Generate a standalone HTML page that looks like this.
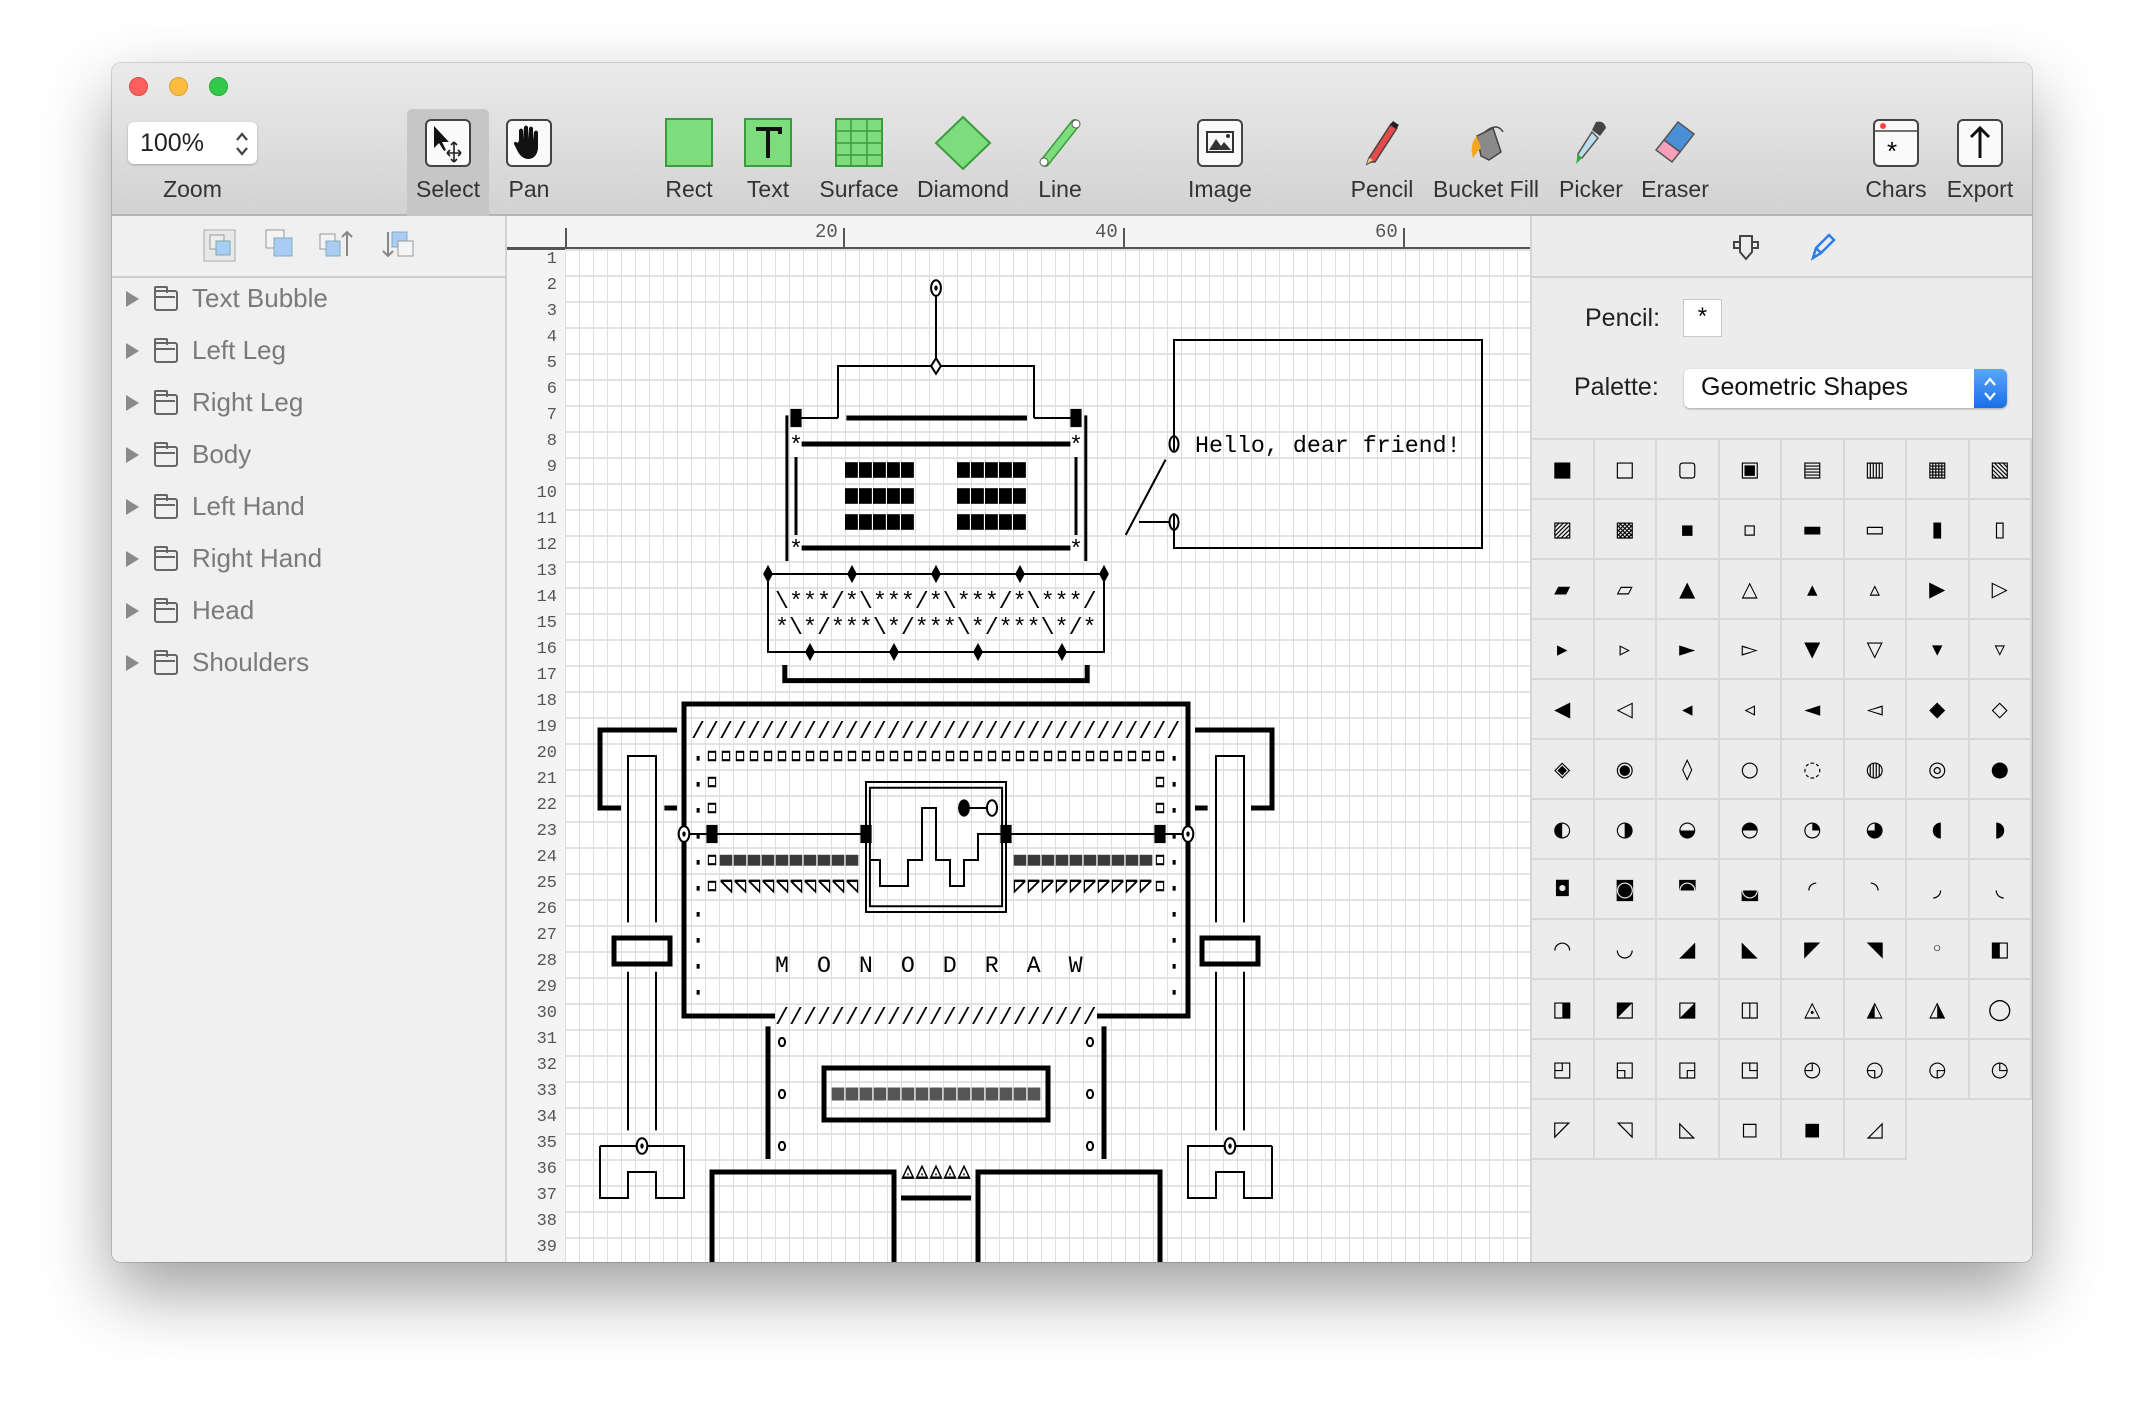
<!DOCTYPE html>
<html><head><meta charset="utf-8"><style>
*{margin:0;padding:0;box-sizing:border-box}
body{width:2144px;height:1424px;background:#fff;position:relative;overflow:hidden;font-family:"Liberation Sans",sans-serif}
.win{position:absolute;left:112px;top:63px;width:1920px;height:1199px;border-radius:9px;overflow:hidden;box-shadow:0 30px 70px rgba(0,0,0,.38),0 0 0 1px rgba(0,0,0,.15);background:#ececec}
.tb{position:absolute;left:0;top:0;width:1920px;height:153px;background:linear-gradient(#ebebeb,#d2d2d2);border-bottom:2px solid #b4b4b4}
.dot{position:absolute;top:14px;width:19px;height:19px;border-radius:50%}
.ti{position:absolute;top:0;width:120px;margin-left:-60px;text-align:center}
.ti svg{position:absolute;left:35px;top:55px}
.ti span{position:absolute;left:0;width:120px;top:113px;font-size:23px;color:#333}
.abs{position:absolute}
.side{position:absolute;left:0;top:153px;width:395px;height:1046px;background:#f0f0f0;border-right:2px solid #d2d2d2}
.item{position:absolute;left:0;height:40px;width:395px;font-size:26px;color:#7a7a7a}
.item .tri{position:absolute;left:14px;top:10px;width:0;height:0;border-left:13px solid #8a8a8a;border-top:8px solid transparent;border-bottom:8px solid transparent}
.item .fold{position:absolute;left:42px;top:9px;width:24px;height:21px;border:2.5px solid #666;border-radius:3px}
.item .fold:before{content:"";position:absolute;left:-2.5px;top:-6px;width:10px;height:5px;border:2.5px solid #666;border-bottom:none;border-radius:2px 2px 0 0}
.item .fold:after{content:"";position:absolute;left:0;top:4px;width:19px;height:0;border-top:2px solid #666}
.item b{position:absolute;left:80px;top:2px;font-weight:normal}
.canvas{position:absolute;left:395px;top:153px;width:1023px;height:1046px;background:#f4f4f4}
.grid{position:absolute;left:58px;top:33px;width:965px;height:1013px;background-color:#fff;background-image:linear-gradient(to right,#dedede 1px,transparent 1px),linear-gradient(to bottom,#e3e3e3 2px,transparent 2px);background-size:14px 26px}
.rn{position:absolute;left:0;width:50px;text-align:right;font-family:"Liberation Mono",monospace;font-size:17px;color:#555}
.right{position:absolute;left:1418px;top:153px;width:502px;height:1046px;background:#ececec;border-left:2px solid #d4d4d4}
.pal{position:absolute;left:0;top:222px;width:502px;display:grid;grid-template-columns:repeat(8,62.5px);grid-auto-rows:60px;border-top:2px solid #d8d8d8}
.pal div{border-right:2px solid #d8d8d8;border-bottom:2px solid #d8d8d8;text-align:center;line-height:58px;font-family:"DejaVu Sans",sans-serif;font-size:21px;color:#000}
.t{stroke:#000;stroke-width:2;fill:none;vector-effect:non-scaling-stroke}
.m{stroke:#000;stroke-width:3;fill:none;vector-effect:non-scaling-stroke}
.k{stroke:#000;stroke-width:5;fill:none;vector-effect:non-scaling-stroke}
.w{fill:#fff}
text{font-family:"Liberation Mono","DejaVu Sans Mono",monospace;font-size:23.3px;fill:#000;white-space:pre}
</style></head><body>
<div class="win">
 <div class="tb">
  <div class="dot" style="left:17px;background:#fc605c;border:1px solid #de4a46"></div>
  <div class="dot" style="left:57px;background:#fdbc40;border:1px solid #dea236"></div>
  <div class="dot" style="left:97px;background:#34c84a;border:1px solid #27aa35"></div>
  <div class="abs" style="left:16px;top:59px;width:129px;height:42px;background:#fff;border-radius:6px;box-shadow:0 1px 2px rgba(0,0,0,.25)"></div>
  <div class="abs" style="left:28px;top:66px;font-size:25px;color:#222">100%</div>
  <svg class="abs" style="left:122px;top:66px" width="16" height="30"><path d="M3,11 8,5 13,11M3,19 8,25 13,19" stroke="#444" stroke-width="2.2" fill="none"/></svg>
  <div class="abs" style="left:16px;top:113px;width:129px;text-align:center;font-size:23px;color:#333">Zoom</div>
  <div class="abs" style="left:295px;top:46px;width:82px;height:107px;background:#c6c6c6;border-radius:5px 5px 0 0"></div>
  <div class="ti" style="left:336px"><svg width="50" height="50"><rect x="3" y="2" width="44" height="46" rx="5" fill="#fafafa" stroke="#444" stroke-width="2"/><path d="M11,8 L11,30 L16,25 L21,33 L23,32 L19,24 L26,24Z" fill="#111"/><path d="M31,24V44M24,35H38M31,24l-3,3M31,24l3,3M31,44l-3,-3M31,44l3,-3M24,35l3,-3M24,35l3,3M38,35l-3,-3M38,35l-3,3" stroke="#222" stroke-width="1.6" fill="none"/></svg><span>Select</span></div>
  <div class="ti" style="left:417px"><svg width="50" height="50"><rect x="3" y="2" width="44" height="46" rx="5" fill="#fafafa" stroke="#444" stroke-width="2"/><path d="M15,22 L15,12 Q17,9 19,12 L19,21 L20,9 Q22,6 24,9 L24,21 L25,10 Q27,7 29,10 L29,22 L30,14 Q32,11 34,14 L34,30 Q33,40 25,41 Q18,41 14,34 L10,26 Q10,22 14,25Z" fill="#111"/></svg><span>Pan</span></div>
  <div class="ti" style="left:577px"><svg width="50" height="50"><rect x="2" y="1" width="46" height="47" fill="#7ddd7d" stroke="#3c9b3c" stroke-width="2"/></svg><span>Rect</span></div>
  <div class="ti" style="left:656px"><svg width="50" height="50"><rect x="2" y="1" width="46" height="47" fill="#7ddd7d" stroke="#3c9b3c" stroke-width="2"/><path d="M13,11H37V16M25,11V40" stroke="#111" stroke-width="4" fill="none"/></svg><span>Text</span></div>
  <div class="ti" style="left:747px"><svg width="50" height="50"><rect x="2" y="1" width="46" height="47" fill="#7ddd7d" stroke="#3c9b3c" stroke-width="2"/><path d="M17,1V48M33,1V48M2,13H48M2,25H48M2,37H48" stroke="#3c9b3c" stroke-width="1.5"/></svg><span>Surface</span></div>
  <div class="ti" style="left:851px"><svg width="60" height="56" style="left:30px;top:52px"><path d="M30,2 L57,28 L30,54 L3,28Z" fill="#7ddd7d" stroke="#3c9b3c" stroke-width="2"/></svg><span>Diamond</span></div>
  <div class="ti" style="left:948px"><svg width="50" height="50"><path d="M10,44 L40,6" stroke="#3c9b3c" stroke-width="10" stroke-linecap="round"/><path d="M10,44 L40,6" stroke="#7ddd7d" stroke-width="7" stroke-linecap="round"/><circle cx="41" cy="6" r="4" fill="#fff" stroke="#555"/><circle cx="9" cy="44" r="4" fill="#fff" stroke="#555"/></svg><span>Line</span></div>
  <div class="ti" style="left:1108px"><svg width="50" height="50"><rect x="3" y="2" width="44" height="46" rx="5" fill="#fafafa" stroke="#444" stroke-width="2"/><rect x="12" y="14" width="26" height="20" fill="none" stroke="#333" stroke-width="2"/><path d="M14,32 L21,21 L26,28 L29,24 L36,32Z" fill="#333"/><circle cx="33" cy="18" r="2" fill="#333"/></svg><span>Image</span></div>
  <div class="ti" style="left:1270px"><svg width="50" height="50"><path d="M14,44 L10,46 L12,40 L34,6 L40,10 L18,44Z" fill="#e64a4a" stroke="#444" stroke-width="1.5"/><path d="M33,7 L36,3 L42,7 L39,11Z" fill="#222"/><path d="M10,46 L12,40 L16,42Z" fill="#e8c890"/></svg><span>Pencil</span></div>
  <div class="ti" style="left:1374px"><svg width="50" height="50"><path d="M16,18 L32,10 L40,34 L28,42 L20,38Z" fill="#8a8a8a" stroke="#444" stroke-width="1.5"/><path d="M16,18 Q8,26 12,40 Q16,34 20,30Z" fill="#f5a623"/><path d="M24,14 Q36,4 42,14" stroke="#444" stroke-width="1.5" fill="none"/></svg><span>Bucket Fill</span></div>
  <div class="ti" style="left:1479px"><svg width="50" height="50"><path d="M30,4 Q38,2 40,10 L34,18 L26,12Z" fill="#444"/><path d="M26,14 L32,20 L16,40 L12,40 L12,36Z" fill="#bde" stroke="#555" stroke-width="1.5"/><path d="M12,36 L16,40 L10,46Z" fill="#3a3"/></svg><span>Picker</span></div>
  <div class="ti" style="left:1563px"><svg width="50" height="50"><path d="M28,4 L44,16 L30,34 L14,22Z" fill="#4a90d9" stroke="#555" stroke-width="1.5"/><path d="M14,22 L30,34 L22,44 L6,32Z" fill="#f7a0b8" stroke="#555" stroke-width="1.5"/></svg><span>Eraser</span></div>
  <div class="ti" style="left:1784px"><svg width="50" height="50"><rect x="3" y="2" width="44" height="46" rx="5" fill="#fafafa" stroke="#444" stroke-width="2"/><path d="M3,13H47" stroke="#444" stroke-width="1.5"/><circle cx="12" cy="8" r="3" fill="#f44"/><text x="16" y="42" style="font-family:'Liberation Sans';font-size:26px">*</text></svg><span>Chars</span></div>
  <div class="ti" style="left:1868px"><svg width="50" height="50"><rect x="3" y="2" width="44" height="46" rx="5" fill="#fafafa" stroke="#444" stroke-width="2"/><path d="M25,40V10M16,19L25,10L34,19" stroke="#111" stroke-width="3" fill="none"/></svg><span>Export</span></div>
 </div>

 <div class="side">
  <div class="abs" style="left:0;top:60px;width:395px;height:2px;background:#cfcfcf"></div>
  <svg class="abs" style="left:80px;top:10px" width="230" height="40">
   <rect x="12" y="4" width="31" height="31" fill="#e8e8e8" stroke="#aaa"/><rect x="18" y="9" width="14" height="14" fill="#eee" stroke="#999"/><rect x="24" y="15" width="14" height="14" fill="#a9ccf5" stroke="#7aa"/>
   <rect x="74" y="4" width="18" height="18" fill="#f4f4f4" stroke="#999"/><rect x="82" y="12" width="18" height="18" fill="#a9ccf5" stroke="#8ab"/>
   <rect x="128" y="8" width="15" height="15" fill="#f4f4f4" stroke="#999"/><rect x="134" y="15" width="14" height="15" fill="#a9ccf5" stroke="#8ab"/><path d="M155,30V6M150,11L155,6L160,11" stroke="#888" stroke-width="2" fill="none"/>
   <path d="M196,6V30M191,25L196,30L201,25" stroke="#888" stroke-width="2" fill="none"/><rect x="200" y="6" width="15" height="15" fill="#a9ccf5" stroke="#8ab"/><rect x="206" y="15" width="15" height="15" fill="#f4f4f4" stroke="#999"/>
  </svg>
  <div class="item" style="top:65px"><i class="tri"></i><i class="fold"></i><b>Text Bubble</b></div>
  <div class="item" style="top:117px"><i class="tri"></i><i class="fold"></i><b>Left Leg</b></div>
  <div class="item" style="top:169px"><i class="tri"></i><i class="fold"></i><b>Right Leg</b></div>
  <div class="item" style="top:221px"><i class="tri"></i><i class="fold"></i><b>Body</b></div>
  <div class="item" style="top:273px"><i class="tri"></i><i class="fold"></i><b>Left Hand</b></div>
  <div class="item" style="top:325px"><i class="tri"></i><i class="fold"></i><b>Right Hand</b></div>
  <div class="item" style="top:377px"><i class="tri"></i><i class="fold"></i><b>Head</b></div>
  <div class="item" style="top:429px"><i class="tri"></i><i class="fold"></i><b>Shoulders</b></div>
 </div>

 <div class="canvas">
  <div class="abs" style="left:58px;top:12px;width:2px;height:1034px;background:#555"></div>
  <div class="abs" style="left:0;top:31px;width:1023px;height:3px;background:#555"></div>
  <div class="abs" style="left:336px;top:12px;width:2px;height:20px;background:#555"></div>
  <div class="abs" style="left:616px;top:12px;width:2px;height:20px;background:#555"></div>
  <div class="abs" style="left:896px;top:12px;width:2px;height:20px;background:#555"></div>
  <div class="abs" style="left:308px;top:5px;font-family:'Liberation Mono',monospace;font-size:19px;color:#555">20</div>
  <div class="abs" style="left:588px;top:5px;font-family:'Liberation Mono',monospace;font-size:19px;color:#555">40</div>
  <div class="abs" style="left:868px;top:5px;font-family:'Liberation Mono',monospace;font-size:19px;color:#555">60</div>
  <div class="grid"></div>
  <div class="abs" style="left:0;top:34px">
   <div class="rn" style="top:0">1</div><div class="rn" style="top:26px">2</div><div class="rn" style="top:52px">3</div><div class="rn" style="top:78px">4</div><div class="rn" style="top:104px">5</div><div class="rn" style="top:130px">6</div><div class="rn" style="top:156px">7</div><div class="rn" style="top:182px">8</div><div class="rn" style="top:208px">9</div><div class="rn" style="top:234px">10</div><div class="rn" style="top:260px">11</div><div class="rn" style="top:286px">12</div><div class="rn" style="top:312px">13</div><div class="rn" style="top:338px">14</div><div class="rn" style="top:364px">15</div><div class="rn" style="top:390px">16</div><div class="rn" style="top:416px">17</div><div class="rn" style="top:442px">18</div><div class="rn" style="top:468px">19</div><div class="rn" style="top:494px">20</div><div class="rn" style="top:520px">21</div><div class="rn" style="top:546px">22</div><div class="rn" style="top:572px">23</div><div class="rn" style="top:598px">24</div><div class="rn" style="top:624px">25</div><div class="rn" style="top:650px">26</div><div class="rn" style="top:676px">27</div><div class="rn" style="top:702px">28</div><div class="rn" style="top:728px">29</div><div class="rn" style="top:754px">30</div><div class="rn" style="top:780px">31</div><div class="rn" style="top:806px">32</div><div class="rn" style="top:832px">33</div><div class="rn" style="top:858px">34</div><div class="rn" style="top:884px">35</div><div class="rn" style="top:910px">36</div><div class="rn" style="top:936px">37</div><div class="rn" style="top:962px">38</div><div class="rn" style="top:988px">39</div>
  </div>
  <svg class="abs" style="left:58px;top:33px" width="965" height="1013">
   <defs>
    <pattern id="sq" patternUnits="userSpaceOnUse" width="1" height="1"><path d="M.2,.3h.6v.4h-.6zM.28,.38v.24h.44v-.24z" fill-rule="evenodd"/></pattern>
    <pattern id="dot" patternUnits="userSpaceOnUse" width="1" height="1"><rect x=".4" y=".5" width=".22" height=".18"/></pattern>
    <pattern id="eye" patternUnits="userSpaceOnUse" width="1" height="1"><rect x="0" y=".2" width=".92" height=".6"/></pattern>
    <pattern id="hb" patternUnits="userSpaceOnUse" width="1" height="1"><rect x=".05" y=".3" width=".9" height=".42" fill="#3a3a3a"/></pattern>
    <pattern id="hl" patternUnits="userSpaceOnUse" width="1" height="1"><rect x=".05" y=".25" width=".9" height=".5" fill="#555"/></pattern>
    <pattern id="t1" patternUnits="userSpaceOnUse" width="1" height="1"><path d="M.12,.3H.9V.72Z" fill="none" stroke="#000" stroke-width=".09"/></pattern>
    <pattern id="t2" patternUnits="userSpaceOnUse" width="1" height="1"><path d="M.1,.3H.88L.1,.72Z" fill="none" stroke="#000" stroke-width=".09"/></pattern>
    <pattern id="tu" patternUnits="userSpaceOnUse" width="1" height="1"><path d="M.5,.28L.88,.72H.12Z" fill="none" stroke="#000" stroke-width=".09"/><rect x=".45" y=".55" width=".1" height=".08"/></pattern>
   </defs>
   <g transform="scale(14,26)">
    <path class="t" d="M26.5,1.8V4.2"/>
    <ellipse class="t w" cx="26.5" cy="1.5" rx=".35" ry=".3"/><ellipse cx="26.5" cy="1.5" rx=".12" ry=".1"/>
    <path class="t" d="M19.5,6.5V4.5H26.15M26.85,4.5H33.5V6.5M16.5,6.5H19.5M33.5,6.5H36.5"/>
    <path class="t w" d="M26.5,4.2L26.85,4.5L26.5,4.8L26.15,4.5Z"/>
    <path class="k" d="M20.1,6.5H33"/>
    <rect x="16.1" y="6.15" width=".8" height=".7"/><rect x="36.1" y="6.15" width=".8" height=".7"/>
    <path class="m" d="M15.85,6.4V12M37.2,6.4V12"/>
    <path class="k" d="M16.9,7.5H36.1M16.9,11.5H36.1"/>
    <path class="m" d="M16.5,8V11M36.5,8V11"/>
    <rect x="20" y="8" width="5" height="3" fill="url(#eye)"/><rect x="28" y="8" width="5" height="3" fill="url(#eye)"/>
    <path class="t" d="M14.5,12.5H38.5M14.5,12.8V15.5H38.5V12.8"/>
    <path d="M14.5,12.15l.35,.35l-.35,.35l-.35,-.35zM20.5,12.15l.35,.35l-.35,.35l-.35,-.35zM26.5,12.15l.35,.35l-.35,.35l-.35,-.35zM32.5,12.15l.35,.35l-.35,.35l-.35,-.35zM38.5,12.15l.35,.35l-.35,.35l-.35,-.35zM17.5,15.15l.35,.35l-.35,.35l-.35,-.35zM23.5,15.15l.35,.35l-.35,.35l-.35,-.35zM29.5,15.15l.35,.35l-.35,.35l-.35,-.35zM35.5,15.15l.35,.35l-.35,.35l-.35,-.35z"/>
    <path class="k" d="M15.7,16V16.6H37.3V16"/>
    <path class="k" d="M15,29.5H8.5V17.5H44.5V29.5H38"/>
    <rect x="10" y="19" width="33" height="1" fill="url(#sq)"/>
    <rect x="10" y="20" width="1" height="2" fill="url(#sq)"/><rect x="42" y="20" width="1" height="2" fill="url(#sq)"/>
    <rect x="10" y="23" width="1" height="2" fill="url(#sq)"/><rect x="42" y="23" width="1" height="2" fill="url(#sq)"/>
    <rect x="9" y="19" width="1" height="10" fill="url(#dot)"/><rect x="43" y="19" width="1" height="10" fill="url(#dot)"/>
    <path class="t" d="M8.85,22.5H21.5M31.5,22.5H44.15"/>
    <rect x="10.1" y="22.15" width=".8" height=".7"/><rect x="21.1" y="22.15" width=".8" height=".7"/><rect x="31.1" y="22.15" width=".8" height=".7"/><rect x="42.1" y="22.15" width=".8" height=".7"/>
    <ellipse class="t w" cx="8.5" cy="22.5" rx=".38" ry=".3"/><ellipse cx="8.5" cy="22.5" rx=".12" ry=".1"/>
    <ellipse class="t w" cx="44.5" cy="22.5" rx=".38" ry=".3"/><ellipse cx="44.5" cy="22.5" rx=".12" ry=".1"/>
    <rect x="11" y="23" width="10" height="1" fill="url(#hb)"/><rect x="32" y="23" width="10" height="1" fill="url(#hb)"/>
    <rect x="11" y="24" width="10" height="1" fill="url(#t1)"/><rect x="32" y="24" width="10" height="1" fill="url(#t2)"/>
    <rect class="t" x="21.5" y="20.5" width="10" height="5"/><rect class="t" x="21.78" y="20.72" width="9.44" height="4.56"/>
    <path class="t" d="M21.8,23.5H22.5V24.5H24.5V23.5H25.5V21.5H26.5V23.5H27.5V24.5H28.5V23.5H29.5V22.5H31.2"/>
    <ellipse cx="28.5" cy="21.5" rx=".42" ry=".33"/><path class="t" d="M28.9,21.5H30.15"/><ellipse class="t w" cx="30.5" cy="21.5" rx=".36" ry=".3"/>
    <path class="k" d="M14.5,29.9V35M38.5,29.9V35"/>
    <ellipse class="t w" cx="15.5" cy="30.5" rx=".22" ry=".16"/><ellipse class="t w" cx="15.5" cy="32.5" rx=".22" ry=".16"/><ellipse class="t w" cx="15.5" cy="34.5" rx=".22" ry=".16"/><ellipse class="t w" cx="37.5" cy="30.5" rx=".22" ry=".16"/><ellipse class="t w" cx="37.5" cy="32.5" rx=".22" ry=".16"/><ellipse class="t w" cx="37.5" cy="34.5" rx=".22" ry=".16"/>
    <rect class="k" x="18.5" y="31.5" width="16" height="2"/>
    <rect x="19" y="32" width="15" height="1" fill="url(#hl)"/>
    <path class="k" d="M10.5,39.5V35.5H23.5V39.5M29.5,39.5V35.5H42.5V39.5"/>
    <rect x="24" y="35" width="5" height="1" fill="url(#tu)"/>
    <path class="k" d="M24,36.5H29"/>
    <g>
     <path class="k" d="M8,18.5H2.5V21.5H4M7.1,21.5H8"/>
     <path class="t" d="M4.5,25.9V19.5H6.5V25.9M4.5,27.8V33.9M6.5,27.8V33.9"/>
     <rect class="k" x="3.5" y="26.5" width="4" height="1"/>
     <path class="t" d="M2.5,34.5V36.5H4.5V35.5H6.5V36.5H8.5V34.5H2.5"/>
     <ellipse class="t w" cx="5.5" cy="34.5" rx=".38" ry=".3"/><ellipse cx="5.5" cy="34.5" rx=".12" ry=".1"/>
    </g>
    <g transform="translate(53,0) scale(-1,1)">
     <path class="k" d="M8,18.5H2.5V21.5H4M7.1,21.5H8"/>
     <path class="t" d="M4.5,25.9V19.5H6.5V25.9M4.5,27.8V33.9M6.5,27.8V33.9"/>
     <rect class="k" x="3.5" y="26.5" width="4" height="1"/>
     <path class="t" d="M2.5,34.5V36.5H4.5V35.5H6.5V36.5H8.5V34.5H2.5"/>
     <ellipse class="t w" cx="5.5" cy="34.5" rx=".38" ry=".3"/><ellipse cx="5.5" cy="34.5" rx=".12" ry=".1"/>
    </g>
    <path class="t" d="M43.5,7.2V3.5H65.5V11.5H43.5V10.8M42.9,8.1L40.05,11M41,10.5H43.15"/>
    <ellipse class="t w" cx="43.5" cy="7.5" rx=".32" ry=".3"/><path class="t" d="M43.5,7.25V7.75"/>
    <ellipse class="t w" cx="43.5" cy="10.5" rx=".32" ry=".3"/><path class="t" d="M43.5,10.25V10.75"/>
   </g>
   <text x="224" y="203">*</text><text x="504" y="203">*</text>
   <text x="224" y="307">*</text><text x="504" y="307">*</text>
   <text x="210" y="359">\***/*\***/*\***/*\***/</text>
   <text x="210" y="385">*\*/***\*/***\*/***\*/*</text>
   <text x="126" y="489">///////////////////////////////////</text>
   <text x="210" y="775">///////////////////////</text>
   <text x="210" y="723">M  O  N  O  D  R  A  W</text>
   <text x="630" y="203">Hello, dear friend!</text>
  </svg>
 </div>

 <div class="right">
  <div class="abs" style="left:0;top:60px;width:502px;height:2px;background:#d2d2d2"></div>
  <svg class="abs" style="left:196px;top:14px" width="120" height="36">
   <path d="M12,6H24V22L18,29L12,22Z M6,12H12V18H6Z M24,12H30V18H24Z" fill="none" stroke="#444" stroke-width="2"/>
   <path d="M85,28L88,18L101,5L106,10L93,23Z M85,28L93,23 M88,18L93,23" fill="none" stroke="#2a7ef0" stroke-width="2.5"/>
  </svg>
  <div class="abs" style="left:53px;top:88px;font-size:25px;color:#222">Pencil:</div>
  <div class="abs" style="left:151px;top:83px;width:39px;height:38px;background:#fff;border:1px solid #c8c8c8;text-align:center;font-family:'Liberation Mono',monospace;font-size:24px;line-height:40px">*</div>
  <div class="abs" style="left:42px;top:157px;font-size:25px;color:#222">Palette:</div>
  <div class="abs" style="left:152px;top:153px;width:323px;height:39px;background:#fff;border-radius:6px;box-shadow:0 1px 2px rgba(0,0,0,.3)"></div>
  <div class="abs" style="left:169px;top:157px;font-size:25px;color:#111">Geometric Shapes</div>
  <div class="abs" style="left:442px;top:153px;width:33px;height:39px;background:linear-gradient(#5aa6f8,#1a6fe8);border-radius:0 6px 6px 0"></div>
  <svg class="abs" style="left:450px;top:159px" width="16" height="28"><path d="M3,10 8,4 13,10M3,18 8,24 13,18" stroke="#fff" stroke-width="2.2" fill="none"/></svg>
  <div class="pal">
   <div>■</div><div>□</div><div>▢</div><div>▣</div><div>▤</div><div>▥</div><div>▦</div><div>▧</div>
   <div>▨</div><div>▩</div><div>▪</div><div>▫</div><div>▬</div><div>▭</div><div>▮</div><div>▯</div>
   <div>▰</div><div>▱</div><div>▲</div><div>△</div><div>▴</div><div>▵</div><div>▶</div><div>▷</div>
   <div>▸</div><div>▹</div><div>►</div><div>▻</div><div>▼</div><div>▽</div><div>▾</div><div>▿</div>
   <div>◀</div><div>◁</div><div>◂</div><div>◃</div><div>◄</div><div>◅</div><div>◆</div><div>◇</div>
   <div>◈</div><div>◉</div><div>◊</div><div>○</div><div>◌</div><div>◍</div><div>◎</div><div>●</div>
   <div>◐</div><div>◑</div><div>◒</div><div>◓</div><div>◔</div><div>◕</div><div>◖</div><div>◗</div>
   <div>◘</div><div>◙</div><div>◚</div><div>◛</div><div>◜</div><div>◝</div><div>◞</div><div>◟</div>
   <div>◠</div><div>◡</div><div>◢</div><div>◣</div><div>◤</div><div>◥</div><div>◦</div><div>◧</div>
   <div>◨</div><div>◩</div><div>◪</div><div>◫</div><div>◬</div><div>◭</div><div>◮</div><div>◯</div>
   <div>◰</div><div>◱</div><div>◲</div><div>◳</div><div>◴</div><div>◵</div><div>◶</div><div>◷</div>
   <div>◸</div><div>◹</div><div>◺</div><div>◻</div><div>◼</div><div>◿</div>
  </div>
 </div>
</div>
</body></html>
